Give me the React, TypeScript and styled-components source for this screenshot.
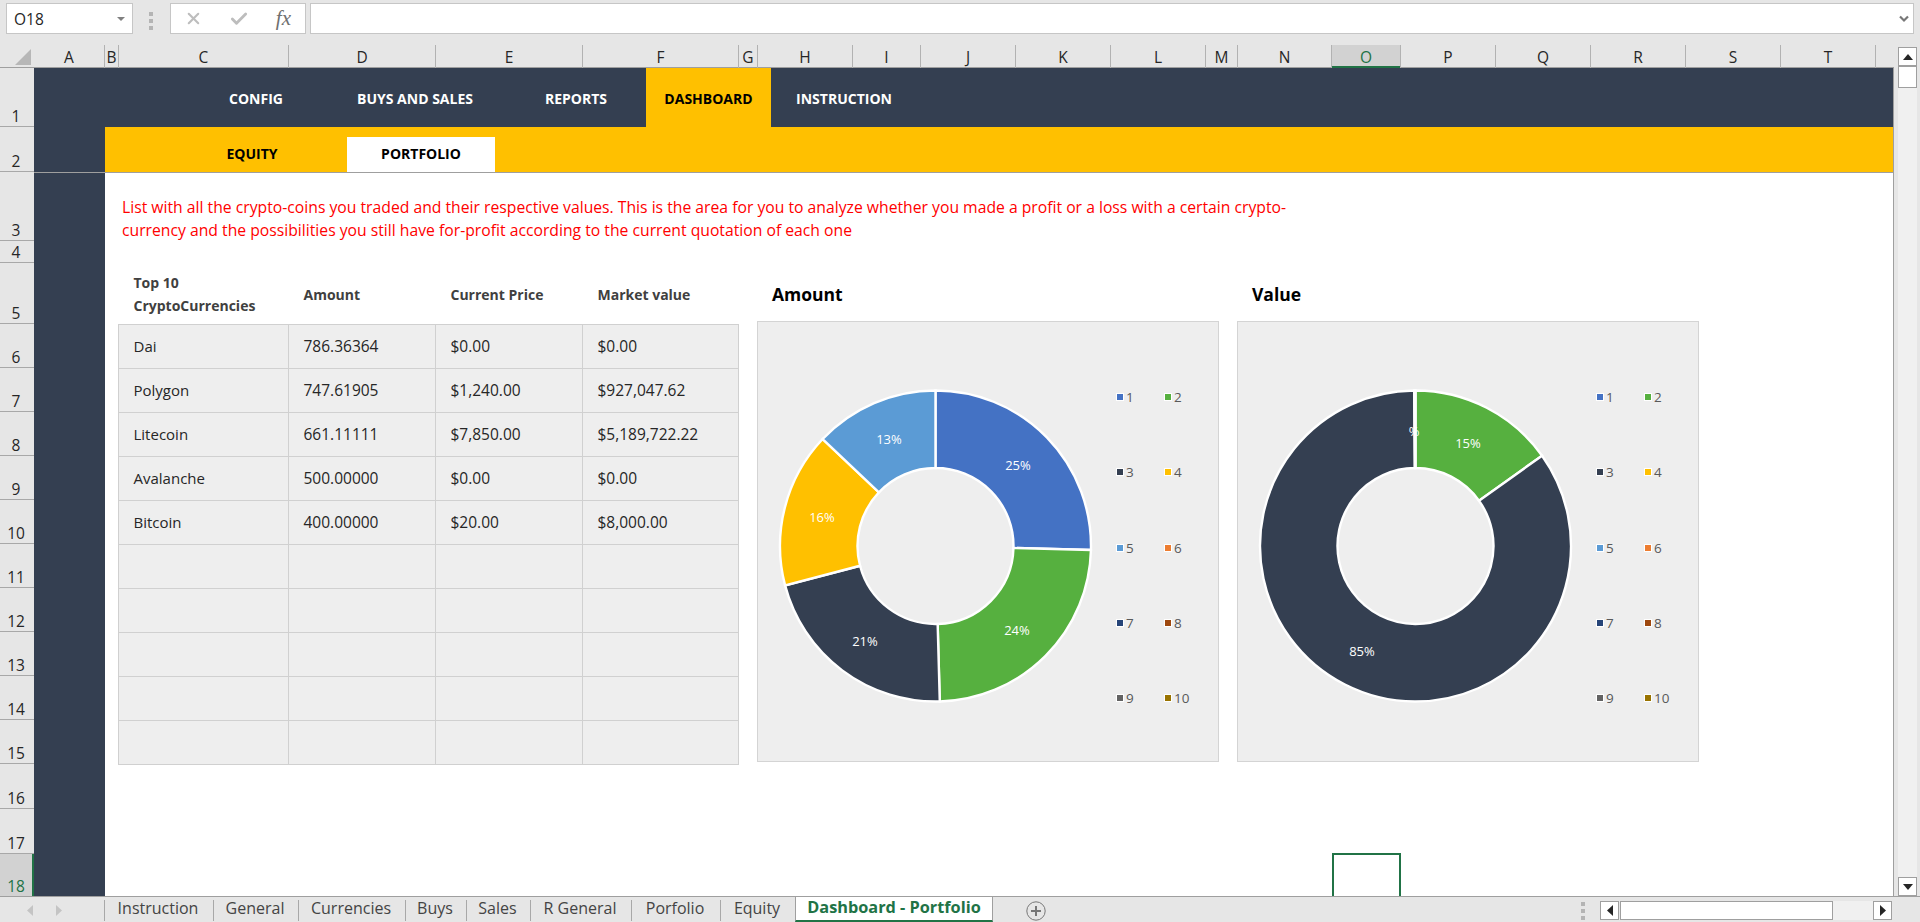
import React from "react";
import styled, {createGlobalStyle} from "styled-components";
import {Check, X} from "lucide-react";

const GREEN = "#217346";
const NAVY = "#343f51";
const AMBER = "#ffc000";
const FONT = `"Open Sans", "Noto Sans", "Liberation Sans", sans-serif`;

const GlobalStyle = createGlobalStyle`
  html, body {
    margin: 0;
    padding: 0;
    background: #e6e6e6;
    overflow: hidden;
  }
  * {
    box-sizing: border-box;
  }
`;

const Window = styled.div`
  width: 1920px;
  height: 922px;
  display: flex;
  flex-direction: column;
  background: #e6e6e6;
  color: #262626;
  font-family: ${FONT};
  overflow: hidden;
`;

/* formula bar */
const FormulaBar = styled.div`
  height: 45px;
  flex: none;
  display: flex;
  align-items: flex-start;
  padding: 3px 6px 0;
`;

const NameBox = styled.div`
  width: 127px;
  height: 31px;
  display: flex;
  align-items: center;
  justify-content: space-between;
  padding: 0 7px;
  background: #fff;
  border: 1px solid #c6c6c6;
  font-size: 15.5px;
`;

const Caret = styled.span`
  width: 0;
  height: 0;
  border-left: 4px solid transparent;
  border-right: 4px solid transparent;
  border-top: 4px solid #808080;
`;

const Grip = styled.div`
  display: flex;
  flex-direction: column;
  gap: 3px;
  width: 4px;
  margin: ${p => p.$margin};
  span {
    width: 4px;
    height: 4px;
    background: #b4b4b4;
  }
`;

const FormulaButtons = styled.div`
  width: 136px;
  height: 31px;
  display: flex;
  align-items: center;
  justify-content: space-between;
  padding: 0 14px 0 13px;
  background: #fff;
  border: 1px solid #c6c6c6;
  color: #bdbdbd;
`;

const Fx = styled.i`
  font-family: "Liberation Serif", serif;
  font-size: 21px;
  font-weight: 400;
  color: #707070;
`;

const FormulaInput = styled.div`
  flex: 1;
  height: 31px;
  margin-left: 4px;
  display: flex;
  align-items: center;
  justify-content: flex-end;
  padding-right: 4px;
  background: #fff;
  border: 1px solid #c6c6c6;
`;

/* grid frame */
const Workspace = styled.div`
  flex: 1;
  display: flex;
  min-height: 0;
`;

const GridColumn = styled.div`
  width: 1894px;
  display: flex;
  flex-direction: column;
`;

const ColumnHeader = styled.div`
  height: 23px;
  flex: none;
  display: flex;
  border-bottom: 1px solid #9f9f9f;
`;

const Corner = styled.div`
  width: 34px;
  flex: none;
  display: flex;
  justify-content: flex-end;
  padding: 4px 3px 3px 0;
  svg {
    display: block;
  }
`;

const ColLabel = styled.div`
  width: ${p => p.$w}px;
  flex: none;
  display: flex;
  align-items: center;
  justify-content: center;
  font-size: 15.5px;
  line-height: 22px;
  border-right: ${p => (p.$last ? "0" : "1px solid #b2b2b2")};
  background: ${p => (p.$active ? "#d2d2d2" : "transparent")};
  color: ${p => (p.$active ? GREEN : "#262626")};
  box-shadow: ${p => (p.$active ? `inset 0 -2px 0 ${GREEN}` : "none")};
  height: 23px;
`;

const GridBody = styled.div`
  flex: 1;
  display: flex;
  min-height: 0;
`;

const RowHeader = styled.div`
  width: 34px;
  flex: none;
  display: flex;
  flex-direction: column;
`;

const RowLabel = styled.div`
  height: ${p => p.$h}px;
  flex: none;
  display: flex;
  align-items: flex-end;
  justify-content: center;
  font-size: 15.5px;
  line-height: 20px;
  padding-right: 2px;
  border-bottom: ${p => (p.$last ? "0" : "1px solid #a8a8a8")};
  background: ${p => (p.$active ? "#d2d2d2" : "transparent")};
  color: ${p => (p.$active ? GREEN : "#262626")};
  box-shadow: ${p => (p.$active ? `inset -2px 0 0 ${GREEN}` : "none")};
`;

const Sheet = styled.div`
  position: relative;
  flex: 1;
  display: flex;
  flex-direction: column;
  background: #fff;
  border-right: 1px solid #9f9f9f;
  overflow: hidden;
`;

const SelectedCell = styled.div`
  position: absolute;
  left: 1298px;
  top: 785px;
  width: 69px;
  height: 60px;
  border: 2px solid ${GREEN};
`;

/* workbook menus */
const TopNav = styled.nav`
  height: 59px;
  flex: none;
  display: flex;
  align-items: stretch;
  padding-left: 154px;
  background: ${NAVY};
`;

const TopNavItem = styled.div`
  width: ${p => p.$w}px;
  flex: none;
  display: flex;
  align-items: center;
  justify-content: center;
  padding-top: 1px;
  font-size: 14px;
  font-weight: 700;
  color: ${p => (p.$active ? "#000" : "#fff")};
  background: ${p => (p.$active ? AMBER : "transparent")};
`;

const SheetMain = styled.div`
  flex: 1;
  display: flex;
  min-height: 0;
`;

const Sidebar = styled.div`
  width: 71px;
  flex: none;
  background: ${NAVY};
`;

const SheetColumn = styled.div`
  flex: 1;
  display: flex;
  flex-direction: column;
  min-width: 0;
`;

const SubNav = styled.div`
  height: 45px;
  flex: none;
  display: flex;
  align-items: flex-end;
  gap: 15px;
  padding-left: 67px;
  background: ${AMBER};
`;

const SubNavItem = styled.div`
  width: ${p => p.$w}px;
  height: 35px;
  display: flex;
  align-items: center;
  justify-content: center;
  padding-bottom: 2px;
  font-size: 14px;
  font-weight: 700;
  color: #000;
  background: ${p => (p.$active ? "#fff" : "transparent")};
`;

const FreezeLine = styled.div`
  height: 1px;
  flex: none;
  margin-left: -71px;
  background: #9f9f9f;
`;

const Content = styled.div`
  flex: 1;
  padding: 23px 0 0 13px;
`;

const Description = styled.p`
  margin: 0 0 21px 4px;
  font-size: 15.72px;
  line-height: 23px;
  color: #ff0000;
  white-space: nowrap;
`;

const Panels = styled.div`
  display: flex;
  align-items: flex-start;
`;

/* table */
const Table = styled.table`
  width: 620px;
  flex: none;
  table-layout: fixed;
  border-collapse: collapse;
`;

const HeadCell = styled.th`
  height: 61px;
  padding: 2px 0 0 15px;
  text-align: left;
  vertical-align: middle;
  font-size: 14px;
  font-weight: 700;
  line-height: 23px;
  color: #404040;
`;

const Cell = styled.td`
  height: 44px;
  padding: 0 0 0 14.5px;
  background: #eeeeee;
  border: 1px solid #d0d0d0;
  color: #262626;
  white-space: nowrap;
  font-size: ${p => (p.$numeric ? "15.5px" : "15px")};
`;

/* charts */
const Charts = styled.div`
  display: flex;
  gap: 18px;
  margin-left: 18px;
`;

const ChartBlock = styled.div`
  width: 462px;
  flex: none;
`;

const ChartTitle = styled.h2`
  margin: 0;
  height: 58px;
  padding: 20px 0 0 15px;
  font-size: 17.5px;
  line-height: 22px;
  font-weight: 700;
  color: #000;
`;

const ChartPanel = styled.div`
  height: 441px;
  display: flex;
  background: #eeeeee;
  border: 1px solid #d4d4d4;
`;

const DonutSvg = styled.svg`
  width: 352px;
  height: 439px;
  flex: none;
  display: block;
`;

const DonutLabel = styled.text`
  font-family: ${FONT};
  font-size: 13px;
  fill: #fff;
  text-anchor: middle;
  dominant-baseline: central;
`;

const Legend = styled.div`
  display: grid;
  grid-template-columns: 48px 48px;
  grid-auto-rows: 20px;
  row-gap: 55.25px;
  padding-top: 65px;
  margin-left: 6px;
  align-content: start;
`;

const LegendItem = styled.div`
  display: flex;
  align-items: center;
  gap: 2px;
  font-size: 13.5px;
  color: #595959;
`;

const Swatch = styled.span`
  width: 8px;
  height: 8px;
  flex: none;
  border: 1px solid #fff;
  background: ${p => p.$color};
`;

/* vertical scrollbar */
const VScroll = styled.div`
  width: 26px;
  flex: none;
  display: flex;
  flex-direction: column;
  padding: 2px 3px 0 4px;
`;

const ScrollButton = styled.div`
  flex: none;
  display: flex;
  align-items: center;
  justify-content: center;
  width: ${p => p.$w || 19}px;
  height: ${p => p.$h || 19}px;
  background: #fff;
  border: 1px solid #9f9f9f;
  svg {
    display: block;
  }
`;

const VThumb = styled.div`
  height: 22px;
  flex: none;
  width: 19px;
  background: #fff;
  border: 1px solid #9f9f9f;
`;

const VTrack = styled.div`
  flex: 1;
  width: 19px;
  background: #f0f0f0;
`;

/* sheet tabs */
const BottomBar = styled.div`
  height: 26px;
  flex: none;
  display: flex;
  align-items: flex-start;
  box-shadow: inset 0 1px 0 #9f9f9f;
`;

const TabArrows = styled.div`
  width: 104px;
  height: 26px;
  flex: none;
  display: flex;
  align-items: center;
  gap: 23px;
  padding: 3px 0 0 27px;
  svg {
    display: block;
  }
`;

const Tab = styled.div`
  width: ${p => p.$w}px;
  height: 21px;
  margin-top: 4px;
  flex: none;
  display: flex;
  align-items: center;
  justify-content: center;
  padding: 0 2px 5px 0;
  font-size: 16px;
  line-height: 20px;
  color: #444;
  border-left: 1px solid #a8a8a8;
`;

const ActiveTab = styled.div`
  width: 198px;
  height: 26px;
  flex: none;
  display: flex;
  align-items: center;
  justify-content: center;
  padding-bottom: 3px;
  font-size: 16.3px;
  font-weight: 700;
  color: ${GREEN};
  background: #fff;
  border-left: 1px solid #9f9f9f;
  border-right: 1px solid #9f9f9f;
  border-top: 1px solid #9f9f9f;
  border-bottom: 2px solid ${GREEN};
`;

const AddSheet = styled.div`
  margin: 5px 0 0 33px;
  flex: none;
  svg {
    display: block;
  }
`;

const HScroll = styled.div`
  margin-left: auto;
  margin-right: 28px;
  display: flex;
  align-items: center;
  height: 26px;
  padding-top: 3px;
`;

const HThumb = styled.div`
  width: 213px;
  height: 19px;
  margin-left: 1px;
  background: #fff;
  border: 1px solid #9f9f9f;
`;

const HTrack = styled.div`
  width: 40px;
  height: 19px;
  background: #f0f0f0;
`;

const columns: [string, number][] = [
    ["A", 71], ["B", 14], ["C", 170], ["D", 147], ["E", 147], ["F", 156], ["G", 19],
    ["H", 95], ["I", 68], ["J", 95], ["K", 95], ["L", 95], ["M", 32], ["N", 94],
    ["O", 69], ["P", 95], ["Q", 95], ["R", 95], ["S", 95], ["T", 95], ["", 18],
];

const rowHeights = [59, 45, 69, 22, 61, 44, 44, 44, 44, 44, 44, 44, 44, 44, 44, 45, 45, 42];

const topNav = [
    {label: "CONFIG", w: 136},
    {label: "BUYS AND SALES", w: 182},
    {label: "REPORTS", w: 140},
    {label: "DASHBOARD", w: 125, active: true},
    {label: "INSTRUCTION", w: 146},
];

const coins = [
    ["Dai", "786.36364", "$0.00", "$0.00"],
    ["Polygon", "747.61905", "$1,240.00", "$927,047.62"],
    ["Litecoin", "661.11111", "$7,850.00", "$5,189,722.22"],
    ["Avalanche", "500.00000", "$0.00", "$0.00"],
    ["Bitcoin", "400.00000", "$20.00", "$8,000.00"],
    ["", "", "", ""],
    ["", "", "", ""],
    ["", "", "", ""],
    ["", "", "", ""],
    ["", "", "", ""],
];

const legendColors = [
    "#4472c4", "#56b03f", NAVY, AMBER, "#5b9bd5",
    "#ed7d31", "#264478", "#9e480e", "#636363", "#997300",
];

const tabs: [string, number][] = [
    ["Instruction", 109], ["General", 85], ["Currencies", 107], ["Buys", 61],
    ["Sales", 64], ["R General", 101], ["Porfolio", 89], ["Equity", 75],
];

// chart centre inside the panel
const CX = 177.5;
const CY = 224;
const OUTER = 155.5;
const INNER = 78;

function polar(r: number, turn: number) {
    const a = turn * Math.PI * 2;
    return [CX + r * Math.sin(a), CY - r * Math.cos(a)];
}

function slicePath(from: number, to: number) {
    const large = to - from > 0.5 ? 1 : 0;
    const [x1, y1] = polar(OUTER, from);
    const [x2, y2] = polar(OUTER, to);
    const [x3, y3] = polar(INNER, to);
    const [x4, y4] = polar(INNER, from);
    return `M${x1} ${y1}A${OUTER} ${OUTER} 0 ${large} 1 ${x2} ${y2}L${x3} ${y3}A${INNER} ${INNER} 0 ${large} 0 ${x4} ${y4}Z`;
}

type Label = {text: string; x: number; y: number};

const Donut = ({values, labels}: {values: number[]; labels: Label[]}) => {
    const total = values.reduce((a, b) => a + b, 0);
    let start = 0;
    return (
        <DonutSvg viewBox="0 0 352 439">
            {values.map((v, i) => {
                const from = start;
                start += v / total;
                if (v === 0) return null;
                return <path key={i} d={slicePath(from, start)} fill={legendColors[i]} stroke="#fff" strokeWidth={2.4}/>;
            })}
            {labels.map(l => (
                <DonutLabel key={l.text} x={l.x} y={l.y}>{l.text}</DonutLabel>
            ))}
        </DonutSvg>
    );
};

const Chart = ({title, values, labels}: {title: string; values: number[]; labels: Label[]}) => (
    <ChartBlock>
        <ChartTitle>{title}</ChartTitle>
        <ChartPanel>
            <Donut values={values} labels={labels}/>
            <Legend>
                {legendColors.map((c, i) => (
                    <LegendItem key={c}><Swatch $color={c}/>{i + 1}</LegendItem>
                ))}
            </Legend>
        </ChartPanel>
    </ChartBlock>
);

const Triangle = ({d, w, h, fill}: {d: string; w: number; h: number; fill: string}) => (
    <svg width={w} height={h} viewBox={`0 0 ${w} ${h}`}><path d={d} fill={fill}/></svg>
);

const GripDots = ({margin}: {margin: string}) => (
    <Grip $margin={margin}><span/><span/><span/></Grip>
);

export default function App() {
    return (
        <Window>
            <GlobalStyle/>
            <FormulaBar>
                <NameBox>O18<Caret/></NameBox>
                <GripDots margin="9px 17px 0 16px"/>
                <FormulaButtons>
                    <X size={19} strokeWidth={2.6}/>
                    <Check size={20} strokeWidth={3.4}/>
                    <Fx>fx</Fx>
                </FormulaButtons>
                <FormulaInput>
                    <svg width="10" height="8" viewBox="0 0 10 8">
                        <path d="M1 1.5 5 5.5 9 1.5" fill="none" stroke="#777" strokeWidth="2.2"/>
                    </svg>
                </FormulaInput>
            </FormulaBar>
            <Workspace>
                <GridColumn>
                    <ColumnHeader>
                        <Corner>
                            <Triangle d="M16 0V16H0Z" w={16} h={16} fill="#b7b7b7"/>
                        </Corner>
                        {columns.map(([name, w], i) => (
                            <ColLabel key={i} $w={w} $active={name === "O"} $last={name === ""}>{name}</ColLabel>
                        ))}
                    </ColumnHeader>
                    <GridBody>
                        <RowHeader>
                            {rowHeights.map((h, i) => (
                                <RowLabel key={i} $h={h} $active={i === 17} $last={i === 17}>{i + 1}</RowLabel>
                            ))}
                        </RowHeader>
                        <Sheet>
                            <TopNav>
                                {topNav.map(n => (
                                    <TopNavItem key={n.label} $w={n.w} $active={n.active}>{n.label}</TopNavItem>
                                ))}
                            </TopNav>
                            <SheetMain>
                                <Sidebar/>
                                <SheetColumn>
                                    <SubNav>
                                        <SubNavItem $w={160}>EQUITY</SubNavItem>
                                        <SubNavItem $w={148} $active>PORTFOLIO</SubNavItem>
                                    </SubNav>
                                    <FreezeLine/>
                                    <Content>
                                        <Description>
                                            List with all the crypto-coins you traded and their respective values. This is the area for you to analyze whether you made a profit or a loss with a certain crypto-<br/>
                                            currency and the possibilities you still have for-profit according to the current quotation of each one
                                        </Description>
                                        <Panels>
                                            <Table>
                                                <colgroup>
                                                    <col width={170}/>
                                                    <col width={147}/>
                                                    <col width={147}/>
                                                    <col width={156}/>
                                                </colgroup>
                                                <thead>
                                                    <tr>
                                                        <HeadCell>Top 10<br/>CryptoCurrencies</HeadCell>
                                                        <HeadCell>Amount</HeadCell>
                                                        <HeadCell>Current Price</HeadCell>
                                                        <HeadCell>Market value</HeadCell>
                                                    </tr>
                                                </thead>
                                                <tbody>
                                                    {coins.map((row, i) => (
                                                        <tr key={i}>
                                                            {row.map((c, j) => <Cell key={j} $numeric={j > 0}>{c}</Cell>)}
                                                        </tr>
                                                    ))}
                                                </tbody>
                                            </Table>
                                            <Charts>
                                                <Chart
                                                    title="Amount"
                                                    values={[786.36364, 747.61905, 661.11111, 500, 400]}
                                                    labels={[
                                                        {text: "25%", x: 260, y: 143},
                                                        {text: "24%", x: 259, y: 308},
                                                        {text: "21%", x: 107, y: 319},
                                                        {text: "16%", x: 64, y: 195},
                                                        {text: "13%", x: 131, y: 117},
                                                    ]}
                                                />
                                                <Chart
                                                    title="Value"
                                                    values={[0, 927047.62, 5189722.22, 0, 8000]}
                                                    labels={[
                                                        {text: "%", x: 176, y: 109},
                                                        {text: "15%", x: 230, y: 121},
                                                        {text: "85%", x: 124, y: 329},
                                                    ]}
                                                />
                                            </Charts>
                                        </Panels>
                                    </Content>
                                </SheetColumn>
                            </SheetMain>
                            <SelectedCell/>
                        </Sheet>
                    </GridBody>
                </GridColumn>
                <VScroll>
                    <ScrollButton>
                        <Triangle d="M5 0 10 6H0Z" w={10} h={6} fill="#262626"/>
                    </ScrollButton>
                    <VThumb/>
                    <VTrack/>
                    <ScrollButton>
                        <Triangle d="M0 0H10L5 6Z" w={10} h={6} fill="#262626"/>
                    </ScrollButton>
                </VScroll>
            </Workspace>
            <BottomBar>
                <TabArrows>
                    <Triangle d="M6 0V11L0 5.5Z" w={6} h={11} fill="#c4c4c4"/>
                    <Triangle d="M0 0V11L6 5.5Z" w={6} h={11} fill="#c4c4c4"/>
                </TabArrows>
                {tabs.map(([name, w]) => <Tab key={name} $w={w}>{name}</Tab>)}
                <ActiveTab>Dashboard - Portfolio</ActiveTab>
                <AddSheet>
                    <svg width="20" height="20" viewBox="0 0 20 20" fill="none" stroke="#777">
                        <circle cx="10" cy="10" r="9.2" strokeWidth="1"/>
                        <path d="M10 5v10M5 10h10" strokeWidth="2"/>
                    </svg>
                </AddSheet>
                <HScroll>
                    <GripDots margin="0 15px 0 0"/>
                    <ScrollButton $h={19}>
                        <Triangle d="M6 0V11L0 5.5Z" w={6} h={11} fill="#262626"/>
                    </ScrollButton>
                    <HThumb/>
                    <HTrack/>
                    <ScrollButton $h={19}>
                        <Triangle d="M0 0V11L6 5.5Z" w={6} h={11} fill="#262626"/>
                    </ScrollButton>
                </HScroll>
            </BottomBar>
        </Window>
    );
}
